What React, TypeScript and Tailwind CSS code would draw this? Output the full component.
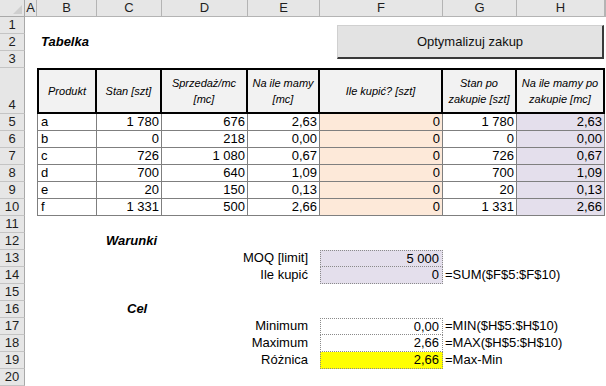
import React from 'react';

// grid placement classes, index = grid track (0 = header track)
const COLS = ['col-start-1', 'col-start-2', 'col-start-3', 'col-start-4', 'col-start-5', 'col-start-6', 'col-start-7', 'col-start-8', 'col-start-9', 'col-start-10'];
const ROWS = [
  'row-start-1', 'row-start-2', 'row-start-3', 'row-start-4', 'row-start-5', 'row-start-6', 'row-start-7',
  'row-start-8', 'row-start-9', 'row-start-10', 'row-start-11', 'row-start-12', 'row-start-13', 'row-start-14',
  'row-start-15', 'row-start-16', 'row-start-17', 'row-start-18', 'row-start-19', 'row-start-20', 'row-start-21',
];

const LETTERS = ['A', 'B', 'C', 'D', 'E', 'F', 'G', 'H', ''];

const products = [
  ['a', '1 780', '676', '2,63', '0', '1 780', '2,63'],
  ['b', '0', '218', '0,00', '0', '0', '0,00'],
  ['c', '726', '1 080', '0,67', '0', '726', '0,67'],
  ['d', '700', '640', '1,09', '0', '700', '1,09'],
  ['e', '20', '150', '0,13', '0', '20', '0,13'],
  ['f', '1 331', '500', '2,66', '0', '1 331', '2,66'],
];

const headers: React.ReactNode[] = [
  'Produkt',
  'Stan [szt]',
  <>Sprzedaż/mc<br />[mc]</>,
  <>Na ile mamy<br />[mc]</>,
  'Ile kupić? [szt]',
  <>Stan po<br />zakupie [szt]</>,
  <>Na ile mamy po<br />zakupie [mc]</>,
];

const Cell: React.FC<{ col: number; row: number; className?: string; children?: React.ReactNode }> = ({ col, row, className = '', children }) => (
  <div className={`${COLS[col]} ${ROWS[row]} ${className}`}>{children}</div>
);

export default function App() {
  return (
    <div className="relative w-[606px] h-[386px] overflow-hidden bg-white text-black font-['Liberation_Sans',Arial,sans-serif] text-[13px]">
      <div className="grid grid-cols-[25px_12px_60px_65px_86px_72px_123px_74px_88px_1px] grid-rows-[17px_17px_17px_17px_46px_repeat(16,17px)]">
        {/* corner */}
        <Cell col={0} row={0} className="relative bg-[#e6e6e6] border-r border-b border-[#a9a9a9]">
          <svg className="absolute right-[2px] bottom-[2px]" width="9" height="9" viewBox="0 0 9 9">
            <path d="M9 0 L9 9 L0 9 Z" fill="#cfcfcf" />
          </svg>
        </Cell>

        {/* column letters */}
        {LETTERS.map((l, i) => (
          <Cell key={`c${i}`} col={i + 1} row={0} className="flex items-center justify-center bg-[#e6e6e6] border-r border-b border-[#b4b4b4] text-[#1e1e1e] leading-[16px] overflow-visible">
            {l}
          </Cell>
        ))}

        {/* row numbers */}
        {Array.from({ length: 20 }, (_, i) => (
          <Cell key={`r${i}`} col={0} row={i + 1} className="flex items-end justify-center bg-[#e6e6e6] border-r border-b border-r-[#a9a9a9] border-b-[#c4c4c4] text-[#1e1e1e] text-[13px] leading-[16px]">
            {i + 1}
          </Cell>
        ))}

        <Cell col={2} row={2} className="pl-[4px] font-bold italic leading-[16px] whitespace-nowrap">
          Tabelka
        </Cell>

        {/* table header */}
        {headers.map((h, i) => (
          <Cell key={`h${i}`} col={i + 2} row={4} className={`flex items-center justify-center text-center italic text-[11px] leading-[16px] bg-[#f2f2f2] border-y-2 border-r-2 border-black ${i === 0 ? 'border-l-2' : ''}`}>
            <span>{h}</span>
          </Cell>
        ))}

        {/* table rows */}
        {products.map((r, ri) =>
          r.map((v, ci) => (
            <Cell
              key={`d${ri}-${ci}`}
              col={ci + 2}
              row={ri + 5}
              className={`px-[2px] leading-[16px] border-r border-b border-[#7f7f7f] ${ci === 0 ? 'border-l text-left pl-[3px]' : 'text-right'} ${ci === 4 ? 'bg-[#fde9d9]' : ''} ${ci === 6 ? 'bg-[#e4dfec]' : ''}`}
            >
              {v}
            </Cell>
          ))
        )}

        {/* conditions */}
        <Cell col={3} row={12} className="col-span-2 pl-[9px] font-bold italic leading-[16px]">Warunki</Cell>
        <Cell col={4} row={13} className="col-span-2 text-right pr-[12px] leading-[16px]">MOQ [limit]</Cell>
        <Cell col={6} row={13} className="text-right pr-[3px] leading-[15px] bg-[#e4dfec] border border-dotted border-[#8a8a8a]">5 000</Cell>
        <Cell col={4} row={14} className="col-span-2 text-right pr-[12px] leading-[16px]">Ile kupić</Cell>
        <Cell col={6} row={14} className="text-right pr-[3px] leading-[16px] bg-[#e4dfec] border-x border-b border-dotted border-[#8a8a8a]">0</Cell>
        <Cell col={7} row={14} className="col-span-3 pl-[2px] leading-[16px] whitespace-nowrap">=SUM($F$5:$F$10)</Cell>

        {/* objective */}
        <Cell col={3} row={16} className="pl-[30px] font-bold italic leading-[16px]">Cel</Cell>
        <Cell col={4} row={17} className="col-span-2 text-right pr-[12px] leading-[16px]">Minimum</Cell>
        <Cell col={6} row={17} className="text-right pr-[3px] leading-[15px] border border-dotted border-[#8a8a8a]">0,00</Cell>
        <Cell col={7} row={17} className="col-span-3 pl-[2px] leading-[16px] whitespace-nowrap">=MIN($H$5:$H$10)</Cell>
        <Cell col={4} row={18} className="col-span-2 text-right pr-[12px] leading-[16px]">Maximum</Cell>
        <Cell col={6} row={18} className="text-right pr-[3px] leading-[16px] border-x border-b border-dotted border-[#8a8a8a]">2,66</Cell>
        <Cell col={7} row={18} className="col-span-3 pl-[2px] leading-[16px] whitespace-nowrap">=MAX($H$5:$H$10)</Cell>
        <Cell col={4} row={19} className="col-span-2 text-right pr-[12px] leading-[16px]">Różnica</Cell>
        <Cell col={6} row={19} className="text-right pr-[3px] leading-[16px] bg-[#ffff00] border-x border-b border-dotted border-[#8a8a8a]">2,66</Cell>
        <Cell col={7} row={19} className="col-span-3 pl-[2px] leading-[16px] whitespace-nowrap">=Max-Min</Cell>
      </div>

      {/* macro button floating over the sheet */}
      <button className="absolute left-[337px] top-[25px] w-[267px] h-[34px] flex items-center justify-center bg-[#e3e3e3] border-t border-l border-[#d0d0d0] border-r-2 border-b-2 border-r-[#3a3a3a] border-b-[#3a3a3a] text-[13px] text-[#111]">
        Optymalizuj zakup
      </button>
    </div>
  );
}
